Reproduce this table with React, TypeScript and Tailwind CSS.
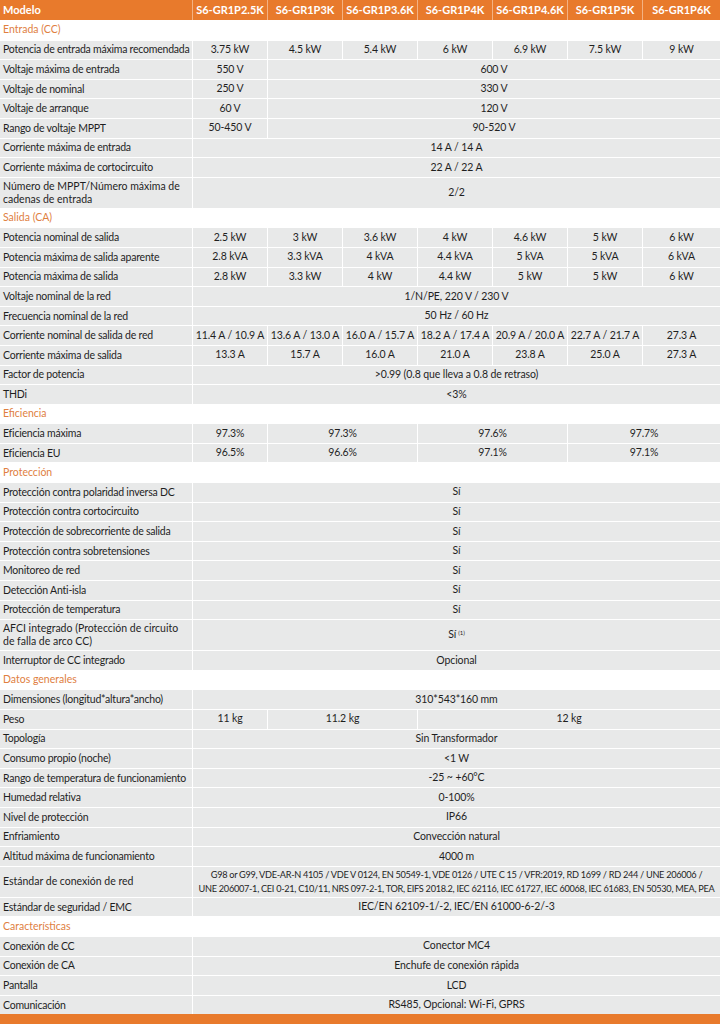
type Cell = [string, number];

type Row =
  | { kind: "section"; title: string }
  | { kind: "data"; label: string; cells: Cell[]; tall?: boolean; sup?: boolean; lines?: string[] };

const models = ["S6-GR1P2.5K", "S6-GR1P3K", "S6-GR1P3.6K", "S6-GR1P4K", "S6-GR1P4.6K", "S6-GR1P5K", "S6-GR1P6K"];

const each = (vals: string[]): Cell[] => vals.map((v) => [v, 1] as Cell);
const all = (v: string): Cell[] => [[v, 7]];

const rows: Row[] = [
  { kind: "section", title: "Entrada (CC)" },
  { kind: "data", label: "Potencia de entrada máxima recomendada", cells: each(["3.75 kW", "4.5 kW", "5.4 kW", "6 kW", "6.9 kW", "7.5 kW", "9 kW"]) },
  { kind: "data", label: "Voltaje máxima de entrada", cells: [["550 V", 1], ["600 V", 6]] },
  { kind: "data", label: "Voltaje de nominal", cells: [["250 V", 1], ["330 V", 6]] },
  { kind: "data", label: "Voltaje de arranque", cells: [["60 V", 1], ["120 V", 6]] },
  { kind: "data", label: "Rango de voltaje MPPT", cells: [["50-450 V", 1], ["90-520 V", 6]] },
  { kind: "data", label: "Corriente máxima de entrada", cells: all("14 A / 14 A") },
  { kind: "data", label: "Corriente máxima de cortocircuito", cells: all("22 A / 22 A") },
  { kind: "data", label: "Número de MPPT/Número máxima de cadenas de entrada", cells: all("2/2"), tall: true },
  { kind: "section", title: "Salida (CA)" },
  { kind: "data", label: "Potencia nominal de salida", cells: each(["2.5 kW", "3 kW", "3.6 kW", "4 kW", "4.6 kW", "5 kW", "6 kW"]) },
  { kind: "data", label: "Potencia máxima de salida aparente", cells: each(["2.8 kVA", "3.3 kVA", "4 kVA", "4.4 kVA", "5 kVA", "5 kVA", "6 kVA"]) },
  { kind: "data", label: "Potencia máxima de salida", cells: each(["2.8 kW", "3.3 kW", "4 kW", "4.4 kW", "5 kW", "5 kW", "6 kW"]) },
  { kind: "data", label: "Voltaje nominal de la red", cells: all("1/N/PE, 220 V / 230 V") },
  { kind: "data", label: "Frecuencia nominal de la red", cells: all("50 Hz / 60 Hz") },
  { kind: "data", label: "Corriente nominal de salida de red", cells: each(["11.4 A / 10.9 A", "13.6 A / 13.0 A", "16.0 A / 15.7 A", "18.2 A / 17.4 A", "20.9 A / 20.0 A", "22.7 A / 21.7 A", "27.3 A"]) },
  { kind: "data", label: "Corriente máxima de salida", cells: each(["13.3 A", "15.7 A", "16.0 A", "21.0 A", "23.8 A", "25.0 A", "27.3 A"]) },
  { kind: "data", label: "Factor de potencia", cells: all(">0.99 (0.8 que lleva a 0.8 de retraso)") },
  { kind: "data", label: "THDi", cells: all("<3%") },
  { kind: "section", title: "Eficiencia" },
  { kind: "data", label: "Eficiencia máxima", cells: [["97.3%", 1], ["97.3%", 2], ["97.6%", 2], ["97.7%", 2]] },
  { kind: "data", label: "Eficiencia EU", cells: [["96.5%", 1], ["96.6%", 2], ["97.1%", 2], ["97.1%", 2]] },
  { kind: "section", title: "Protección" },
  { kind: "data", label: "Protección contra polaridad inversa DC", cells: all("Sí") },
  { kind: "data", label: "Protección contra cortocircuito", cells: all("Sí") },
  { kind: "data", label: "Protección de sobrecorriente de salida", cells: all("Sí") },
  { kind: "data", label: "Protección contra sobretensiones", cells: all("Sí") },
  { kind: "data", label: "Monitoreo de red", cells: all("Sí") },
  { kind: "data", label: "Detección Anti-isla", cells: all("Sí") },
  { kind: "data", label: "Protección de temperatura", cells: all("Sí") },
  { kind: "data", label: "AFCI integrado (Protección de circuito de falla de arco CC)", cells: all("Sí"), tall: true, sup: true },
  { kind: "data", label: "Interruptor de CC integrado", cells: all("Opcional") },
  { kind: "section", title: "Datos generales" },
  { kind: "data", label: "Dimensiones (longitud*altura*ancho)", cells: all("310*543*160 mm") },
  { kind: "data", label: "Peso", cells: [["11 kg", 1], ["11.2 kg", 2], ["12 kg", 4]] },
  { kind: "data", label: "Topología", cells: all("Sin Transformador") },
  { kind: "data", label: "Consumo propio (noche)", cells: all("<1 W") },
  { kind: "data", label: "Rango de temperatura de funcionamiento", cells: all("-25 ~ +60°C") },
  { kind: "data", label: "Humedad relativa", cells: all("0-100%") },
  { kind: "data", label: "Nivel de protección", cells: all("IP66") },
  { kind: "data", label: "Enfriamiento", cells: all("Convección natural") },
  { kind: "data", label: "Altitud máxima de funcionamiento", cells: all("4000 m") },
  {
    kind: "data",
    label: "Estándar de conexión de red",
    cells: all(""),
    tall: true,
    lines: [
      "G98 or G99, VDE-AR-N 4105 / VDE V 0124, EN 50549-1, VDE 0126 / UTE C 15 / VFR:2019, RD 1699 / RD 244 / UNE 206006 /",
      "UNE 206007-1, CEI 0-21, C10/11, NRS 097-2-1, TOR, EIFS 2018.2, IEC 62116, IEC 61727, IEC 60068, IEC 61683, EN 50530, MEA, PEA",
    ],
  },
  { kind: "data", label: "Estándar de seguridad / EMC", cells: all("IEC/EN 62109-1/-2, IEC/EN 61000-6-2/-3") },
  { kind: "section", title: "Características" },
  { kind: "data", label: "Conexión de CC", cells: all("Conector MC4") },
  { kind: "data", label: "Conexión de CA", cells: all("Enchufe de conexión rápida") },
  { kind: "data", label: "Pantalla", cells: all("LCD") },
  { kind: "data", label: "Comunicación", cells: all("RS485, Opcional: Wi-Fi, GPRS") },
];

const spanClass: Record<number, string> = {
  1: "col-span-1",
  2: "col-span-2",
  4: "col-span-4",
  6: "col-span-6",
  7: "col-span-7",
};

export default function App() {
  return (
    <div className="w-[720px] h-[1025px] bg-white overflow-hidden text-[10.5px] text-[#1f1f1f]" style={{ fontFamily: "Lato, 'Liberation Sans', sans-serif" }}>
      <div className="grid grid-cols-[192px_repeat(6,74px)_77px] gap-px bg-white">
        {/* header, separators in a lighter orange */}
        <div className="col-span-8 grid grid-cols-subgrid gap-px bg-[#f3b283]">
          <div className="h-[20px] bg-[#e87a2c] text-white font-bold text-[11px] flex items-center pl-[3px]">Modelo</div>
          {models.map((m) => (
            <div key={m} className="h-[20px] bg-[#e87a2c] text-white font-bold text-[11px] flex items-center justify-center">
              {m}
            </div>
          ))}
        </div>

        {rows.map((r, i) => {
          if (r.kind === "section") {
            return (
              <div key={i} className="col-span-8 h-[18.6px] bg-white text-[#e0803f] flex items-center pl-[3px]">
                {r.title}
              </div>
            );
          }
          const h = r.tall ? "h-[30px]" : "h-[18.6px]";
          return [
            <div
              key={i + "l"}
              className={`${h} bg-[#e8e9e9] flex items-center pl-[3px] leading-[13px] ${r.tall ? "pr-1" : "whitespace-nowrap tracking-[-0.22px]"}`}
            >
              {r.label}
            </div>,
            ...r.cells.map(([v, s], j) => (
              <div key={i + "c" + j} className={`${h} ${spanClass[s]} bg-[#e8e9e9] flex flex-col items-center justify-center text-center whitespace-nowrap tracking-[-0.1px]`}>
                {r.lines ? (
                  r.lines.map((ln) => (
                    <span key={ln} className="text-[9.2px] leading-[13.5px] tracking-[-0.3px]">
                      {ln}
                    </span>
                  ))
                ) : (
                  <span>
                    {v}
                    {r.sup && <sup className="text-[6px] ml-[2px]">(1)</sup>}
                  </span>
                )}
              </div>
            )),
          ];
        })}
      </div>
      <div className="h-[10px] bg-[#e87a2c]" />
    </div>
  );
}
